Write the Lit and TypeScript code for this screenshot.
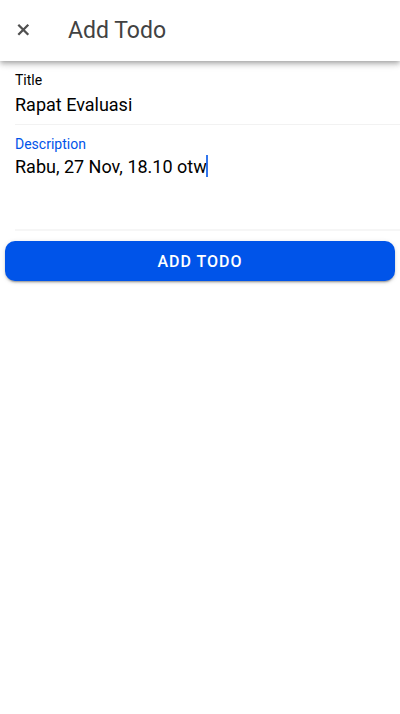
import { LitElement, html, css } from "lit";
import { customElement, state } from "lit/decorators.js";

@customElement("app-root")
export class AppRoot extends LitElement {
  static styles = css`
    :host {
      display: block;
      min-height: 100vh;
      background: #fff;
      color: #000;
      font-family: Roboto, "Liberation Sans", sans-serif;
    }
    .bar {
      display: flex;
      align-items: center;
      gap: 32px;
      height: 61px;
      padding: 0 10px;
      box-sizing: border-box;
      box-shadow:
        0 2px 4px -1px rgba(0, 0, 0, 0.2),
        0 4px 5px 0 rgba(0, 0, 0, 0.14),
        0 1px 10px 0 rgba(0, 0, 0, 0.12);
    }
    .close {
      display: flex;
      padding: 6px;
      border: 0;
      background: none;
      color: #505050;
    }
    h1 {
      margin: 0;
      font-size: 23px;
      font-weight: 400;
      line-height: 28px;
      color: #424242;
    }
    .field {
      display: flex;
      flex-direction: column;
      margin-left: 15px;
      border-bottom: 1px solid #f2f2f2;
    }
    .title {
      padding: 10px 0 7px;
    }
    .description {
      padding-top: 10px;
      border-bottom-width: 2px;
      border-bottom-color: #f6f6f6;
    }
    label {
      font-size: 14px;
      line-height: 18px;
    }
    .description label {
      color: #0054e9;
    }
    input,
    textarea {
      display: block;
      margin: 0;
      padding: 0;
      border: 0;
      outline: 0;
      background: none;
      color: inherit;
      font-family: inherit;
      font-size: 18px;
      line-height: 24px;
    }
    input {
      width: 100%;
      margin-top: 4px;
    }
    .entry {
      display: flex;
      height: 74px;
      margin-top: 2px;
    }
    textarea {
      height: 72px;
      max-width: 100%;
      resize: none;
      overflow: hidden;
      field-sizing: content;
      caret-color: transparent;
    }
    .caret {
      width: 2px;
      height: 22px;
      margin-left: -1px;
      background: #0054e9;
      opacity: 0.8;
    }
    .submit {
      display: block;
      width: calc(100% - 10px);
      height: 40px;
      margin: 10px 5px;
      border: 0;
      border-radius: 10px;
      background: #0054e9;
      color: #fff;
      font-family: inherit;
      font-size: 16px;
      font-weight: 500;
      letter-spacing: 1px;
      text-transform: uppercase;
      box-shadow:
        0 3px 1px -2px rgba(0, 0, 0, 0.2),
        0 2px 2px 0 rgba(0, 0, 0, 0.14),
        0 1px 5px 0 rgba(0, 0, 0, 0.12);
    }
  `;

  @state() private heading = "Rapat Evaluasi";
  @state() private description = "Rabu, 27 Nov, 18.10 otw";

  render() {
    return html`
      <header class="bar">
        <button class="close" type="button" aria-label="Close">
          <svg width="14" height="14" viewBox="0 0 14 14" aria-hidden="true">
            <path
              d="M2.3 0.8L12.3 10.8M12.3 0.8L2.3 10.8"
              fill="none"
              stroke="currentColor"
              stroke-width="2.3"
            />
          </svg>
        </button>
        <h1>Add Todo</h1>
      </header>
      <form @submit=${(e: Event) => e.preventDefault()}>
        <div class="field title">
          <label for="title">Title</label>
          <input
            id="title"
            type="text"
            .value=${this.heading}
            @input=${(e: Event) => (this.heading = (e.target as HTMLInputElement).value)}
          />
        </div>
        <div class="field description">
          <label for="description">Description</label>
          <div class="entry">
            <textarea
              id="description"
              spellcheck="false"
              .value=${this.description}
              @input=${(e: Event) => (this.description = (e.target as HTMLTextAreaElement).value)}
            ></textarea>
            <span class="caret"></span>
          </div>
        </div>
        <button class="submit" type="submit">Add Todo</button>
      </form>
    `;
  }
}
